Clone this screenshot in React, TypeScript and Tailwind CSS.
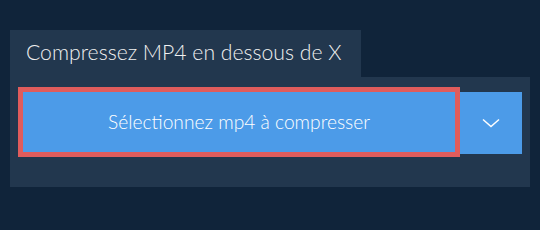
import React from "react";

export default function App() {
  return (
    <div className="w-[540px] h-[230px] bg-[#10243a] pt-[30px] pl-[10px]" style={{ fontFamily: "Lato, 'Noto Sans', sans-serif" }}>
      <div className="w-[351px] h-[47px] bg-[#22374e] flex items-center pl-[16px] pb-[1px]">
        <span className="text-[21.2px] font-light text-[#f0f0f0] leading-none">Compressez MP4 en dessous de X</span>
      </div>
      <div className="w-[520px] h-[110px] bg-[#22374e] pt-[10px] pl-[8px] flex items-start">
        <button className="w-[442px] h-[70px] border-[5px] border-[#e05c5c] bg-[#4c9be8] flex items-center justify-center text-white text-[19.2px] font-light leading-none">
          Sélectionnez mp4 à compresser
        </button>
        <button className="mt-[5px] w-[62px] h-[62px] bg-[#4c9be8] flex items-center justify-center">
          <svg width="18" height="10" viewBox="0 0 18 10" fill="none">
            <path d="M1 1.5 L9 8.5 L17 1.5" stroke="white" strokeWidth="1.5" />
          </svg>
        </button>
      </div>
    </div>
  );
}
